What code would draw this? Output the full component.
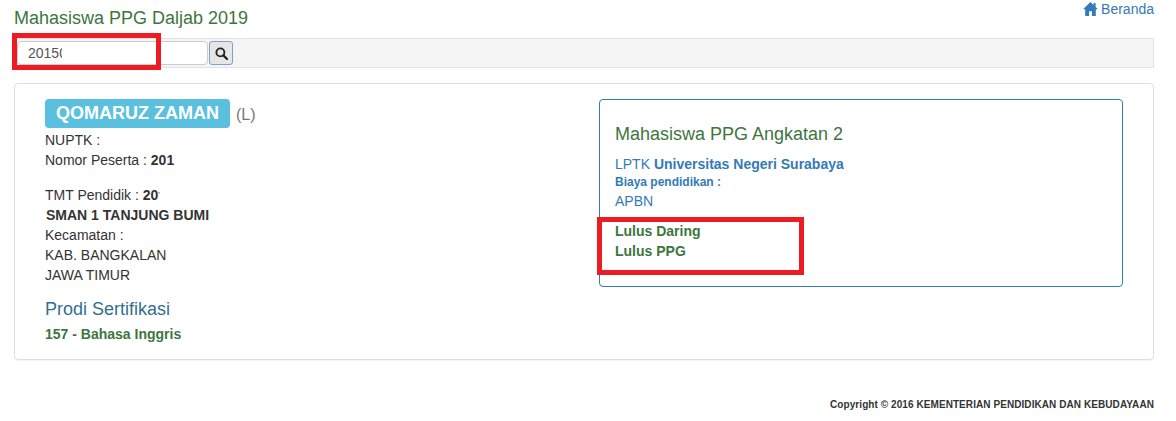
<style>
:global(body) { margin: 0; background: #fff; font-family: "Liberation Sans", Arial, sans-serif; font-size: 14px; line-height: 20px; color: #333; }
.page { position: relative; height: 421px; padding: 0 22px 0 14px; overflow: hidden; }
.top { display: flex; justify-content: space-between; height: 38px; }
.title { margin: 8px 0 0; font-size: 18px; font-weight: 400; line-height: 20px; color: #3c763d; }
.home { display: flex; align-items: center; gap: 3px; height: 18px; color: #337ab7; }
.home svg { width: 15px; height: 14px; }
.search { display: flex; align-items: center; height: 28px; padding-left: 2px; background: #f5f5f5; border: 1px solid #e3e3e3; }
.search input { box-sizing: border-box; width: 191px; height: 24px; padding: 0 10px; border: 1px solid #ccc; border-radius: 4px; font: 14px/20px "Liberation Sans", Arial, sans-serif; color: #555; background: #fff; outline: 0; }
.search button { display: flex; align-items: center; justify-content: center; box-sizing: border-box; width: 24px; height: 24px; margin-left: 1px; padding: 0; background: #e6e6e6; border: 1px solid #7f9fd8; border-radius: 3px; }
.search svg { width: 13px; height: 13px; }
.panel { box-sizing: border-box; display: flex; height: 277px; margin-top: 15px; padding: 15px 30px 0; border: 1px solid #ddd; border-radius: 4px; box-shadow: 0 1px 1px rgba(0,0,0,.05); }
.left { width: 554px; flex: none; }
.name-row { display: flex; align-items: flex-start; gap: 6px; height: 31px; color: #777; font-size: 16px; }
.name-row .sex { margin-top: 6px; }
.label { padding: 3px 11px 3px; background: #5bc0de; border-radius: 4px; color: #fff; font-size: 18px; font-weight: 700; line-height: 23px; }
.left p { margin: 0; height: 20px; }
.gap { margin-top: 15px !important; }
.tick { font-size: 8px; font-weight: 400; vertical-align: 3px; line-height: 1; }
.school { padding-left: 1px; font-weight: 700; }
.prodi { margin: 14px 0 0; font-size: 18px; font-weight: 400; line-height: 20px; color: #31708f; }
.major { margin-top: 5px !important; color: #3c763d; font-weight: 700; }
.box { box-sizing: border-box; width: 524px; height: 188px; padding: 24px 15px 0; border: 1px solid #337ab7; border-radius: 4px; color: #337ab7; }
.box h4 { margin: 0 0 10px; font-size: 18px; font-weight: 400; line-height: 20px; color: #3c763d; }
.box p { margin: 0; }
.small { margin-top: 1px !important; font-size: 12px; font-weight: 700; line-height: 15px; }
.apbn { margin-top: 1px !important; }
.passed { color: #3c763d; font-weight: 700; }
.first { margin-top: 10px !important; }
.copy { margin: 35px 0 0; text-align: right; font-size: 10px; letter-spacing: .073px; font-weight: 700; line-height: 20px; color: #333; }
.mark { position: absolute; box-sizing: border-box; border: 5px solid #ed1c24; }
.m1 { left: 12px; top: 33px; width: 149px; height: 37px; }
.m2 { left: 597px; top: 217px; width: 207px; height: 58px; }
.mask { position: absolute; left: 62px; top: 42px; width: 94px; height: 22px; background: #fff; }
</style>

<div class="page">
  <div class="top">
    <h4 class="title">Mahasiswa PPG Daljab 2019</h4>
    <div class="home">
      <svg viewBox="0 0 15 14" aria-hidden="true"><path fill="#337ab7" d="M7.5 0 0 7.2h2.2V14h3.9V9.2h2.8V14h3.9V7.2H15L12.6 4.9V1h-2v2L7.5 0z"/></svg>
      <span>Beranda</span>
    </div>
  </div>
  <div class="search">
    <input value="20150" aria-label="Cari" />
    <button aria-label="Cari">
      <svg viewBox="0 0 14 14"><circle cx="5.8" cy="5.8" r="4.3" fill="none" stroke="#222" stroke-width="2"/><path d="m9 9 4 4" stroke="#222" stroke-width="2.4" stroke-linecap="round"/></svg>
    </button>
  </div>
  <div class="panel">
    <div class="left">
      <div class="name-row"><span class="label">QOMARUZ ZAMAN</span><span class="sex">(L)</span></div>
      <p>NUPTK :</p>
      <p>Nomor Peserta : <b>201</b></p>
      <p class="gap">TMT Pendidik : <b>20<span class="tick">'</span></b></p>
      <p class="school">SMAN 1 TANJUNG BUMI</p>
      <p>Kecamatan :</p>
      <p>KAB. BANGKALAN</p>
      <p>JAWA TIMUR</p>
      <h4 class="prodi">Prodi Sertifikasi</h4>
      <p class="major">157 - Bahasa Inggris</p>
    </div>
    <div class="box">
      <h4>Mahasiswa PPG Angkatan 2</h4>
      <p>LPTK <b>Universitas Negeri Surabaya</b></p>
      <p class="small">Biaya pendidikan :</p>
      <p class="apbn">APBN</p>
      <p class="passed first">Lulus Daring</p>
      <p class="passed">Lulus PPG</p>
    </div>
  </div>
  <p class="copy">Copyright © 2016 KEMENTERIAN PENDIDIKAN DAN KEBUDAYAAN</p>
  <div class="mask"></div>
  <div class="mark m1"></div>
  <div class="mark m2"></div>
</div>
